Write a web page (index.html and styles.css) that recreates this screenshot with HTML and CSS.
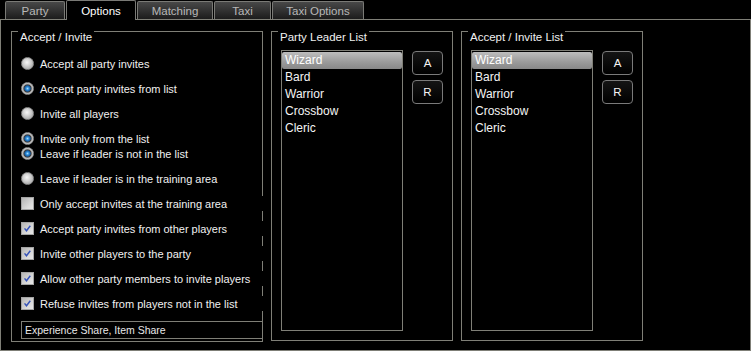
FILE: index.html
```
<!DOCTYPE html>
<html>
<head>
<meta charset="utf-8">
<link rel="stylesheet" href="styles.css">
</head>
<body>
<div class="tabs">
  <div class="tab w-party">Party</div>
  <div class="tab active w-options">Options</div>
  <div class="tab w-matching">Matching</div>
  <div class="tab w-taxi">Taxi</div>
  <div class="tab w-taxiopt">Taxi Options</div>
</div>
<div class="panel">
  <div class="group g-left">
    <div class="legend">Accept / Invite</div>
    <div class="opts">
      <div class="row"><span class="radio"></span>Accept all party invites</div>
      <div class="row"><span class="radio on"></span>Accept party invites from list</div>
      <div class="row"><span class="radio"></span>Invite all players</div>
      <div class="row"><span class="radio on"></span>Invite only from the list</div>
      <div class="row tight"><span class="radio on"></span>Leave if leader is not in the list</div>
      <div class="row"><span class="radio"></span>Leave if leader is in the training area</div>
      <div class="row cover"><span class="check"></span>Only accept invites at the training area</div>
      <div class="row cover"><span class="check"><svg viewBox="0 0 13 13"><path d="M3 6.3 L5.3 9.2 L9.8 3.2" /></svg></span>Accept party invites from other players</div>
      <div class="row cover"><span class="check"><svg viewBox="0 0 13 13"><path d="M3 6.3 L5.3 9.2 L9.8 3.2" /></svg></span>Invite other players to the party</div>
      <div class="row cover"><span class="check"><svg viewBox="0 0 13 13"><path d="M3 6.3 L5.3 9.2 L9.8 3.2" /></svg></span>Allow other party members to invite players</div>
      <div class="row cover"><span class="check"><svg viewBox="0 0 13 13"><path d="M3 6.3 L5.3 9.2 L9.8 3.2" /></svg></span>Refuse invites from players not in the list</div>
    </div>
    <div class="textbox">Experience Share, Item Share</div>
  </div>
  <div class="group g-list">
    <div class="legend">Party Leader List</div>
    <div class="list-wrap">
      <div class="listbox">
        <div class="item sel">Wizard</div>
        <div class="item">Bard</div>
        <div class="item">Warrior</div>
        <div class="item">Crossbow</div>
        <div class="item">Cleric</div>
      </div>
      <div class="btns">
        <div class="btn">A</div>
        <div class="btn">R</div>
      </div>
    </div>
  </div>
  <div class="group g-list">
    <div class="legend">Accept / Invite List</div>
    <div class="list-wrap">
      <div class="listbox">
        <div class="item sel">Wizard</div>
        <div class="item">Bard</div>
        <div class="item">Warrior</div>
        <div class="item">Crossbow</div>
        <div class="item">Cleric</div>
      </div>
      <div class="btns">
        <div class="btn">A</div>
        <div class="btn">R</div>
      </div>
    </div>
  </div>
</div>
</body>
</html>
```
FILE: styles.css
```
html, body {
  margin: 0;
  background: #000;
}
body {
  width: 751px;
  height: 351px;
  overflow: hidden;
  font-family: "Liberation Sans", Arial, sans-serif;
  font-size: 11px;
  color: #f0f0f0;
}
.tabs {
  display: flex;
  align-items: flex-end;
  gap: 1px;
  height: 19px;
  padding-left: 5px;
  position: relative;
  z-index: 1;
}
.tab {
  box-sizing: border-box;
  height: 18px;
  border: 1px solid #7a7a76;
  border-bottom: none;
  border-radius: 2px 2px 0 0;
  background: linear-gradient(#484848, #1c1c1c);
  color: #b8b8b8;
  text-align: center;
  line-height: 18px;
  font-size: 11.5px;
}
.tab.active {
  height: 20px;
  margin-bottom: -1px;
  background: #000;
  color: #ffffff;
  line-height: 20px;
}
.w-party { width: 60px; }
.w-options { width: 70px; }
.w-matching { width: 76px; }
.w-taxi { width: 57px; }
.w-taxiopt { width: 92px; }

.panel {
  box-sizing: border-box;
  width: 751px;
  height: 332px;
  border: 1px solid #7f7f77;
  display: flex;
  align-items: flex-start;
  gap: 8px;
  padding: 11px 0 0 10px;
}
.group {
  box-sizing: border-box;
  border: 1px solid #7f7f77;
  display: flex;
  flex-direction: column;
  align-items: flex-start;
}
.g-left {
  width: 252px;
  height: 311px;
  padding: 0 0 0 9px;
}
.g-list {
  width: 182px;
  height: 310px;
  padding: 0 0 0 9px;
}
.legend {
  height: 14px;
  line-height: 14px;
  margin: -2px 0 0 -3px;
  padding: 0 2px;
  background: #000;
  color: #f0f0f0;
  font-size: 11.5px;
}
.opts {
  margin-top: 12px;
  align-self: stretch;
  display: flex;
  flex-direction: column;
  gap: 10px;
}
.row {
  display: flex;
  align-items: center;
  gap: 6px;
  height: 15px;
  white-space: nowrap;
}
.row.tight {
  margin-top: -10px;
}
.row.cover {
  background: #000;
  margin-right: -3px;
}
.radio {
  flex: none;
  box-sizing: border-box;
  width: 13px;
  height: 13px;
  border-radius: 50%;
  border: 1px solid #8c8c8c;
  background: radial-gradient(circle at 45% 40%, #f6f6f6 0, #d8d8d8 3px, #b6b6b6 6px);
}
.radio.on {
  background: radial-gradient(circle at 50% 50%, #9fdcff 0, #2c8ad8 1.6px, #14589c 2.8px, #3c3c3c 3.6px, #9c9c9c 4.4px, #d6d6d6 5.5px);
}
.check {
  flex: none;
  box-sizing: border-box;
  width: 13px;
  height: 13px;
  border: 1px solid #a4a4a4;
  background: linear-gradient(135deg, #b4b4b4, #dcdcdc 70%, #e6e6e6);
  display: flex;
}
.check svg {
  width: 11px;
  height: 11px;
}
.check path {
  fill: none;
  stroke: #3552b8;
  stroke-width: 1.7;
}
.textbox {
  box-sizing: border-box;
  margin-top: 10px;
  align-self: stretch;
  margin-right: -1px;
  height: 18px;
  border: 1px solid #7f7f77;
  padding-left: 3px;
  line-height: 16px;
  color: #e8e8e8;
  font-size: 10.5px;
}
.list-wrap {
  margin-top: 6px;
  display: flex;
  gap: 9px;
}
.listbox {
  box-sizing: border-box;
  width: 122px;
  height: 281px;
  border: 1px solid #7f7f77;
  padding-top: 1px;
}
.item {
  height: 17px;
  line-height: 17px;
  padding-left: 3px;
  font-size: 12px;
  color: #f4f4f4;
}
.item.sel {
  background: linear-gradient(#bdbdbd, #9a9a9a 60%, #888888);
  border-radius: 2px;
  color: #ffffff;
}
.btns {
  margin-top: 1px;
  display: flex;
  flex-direction: column;
  gap: 5px;
}
.btn {
  box-sizing: border-box;
  width: 31px;
  height: 24px;
  border: 1px solid #7a7a7a;
  border-radius: 4px;
  background: linear-gradient(#141414, #000);
  color: #f4f4f4;
  text-align: center;
  line-height: 22px;
  font-size: 11.5px;
}
```
